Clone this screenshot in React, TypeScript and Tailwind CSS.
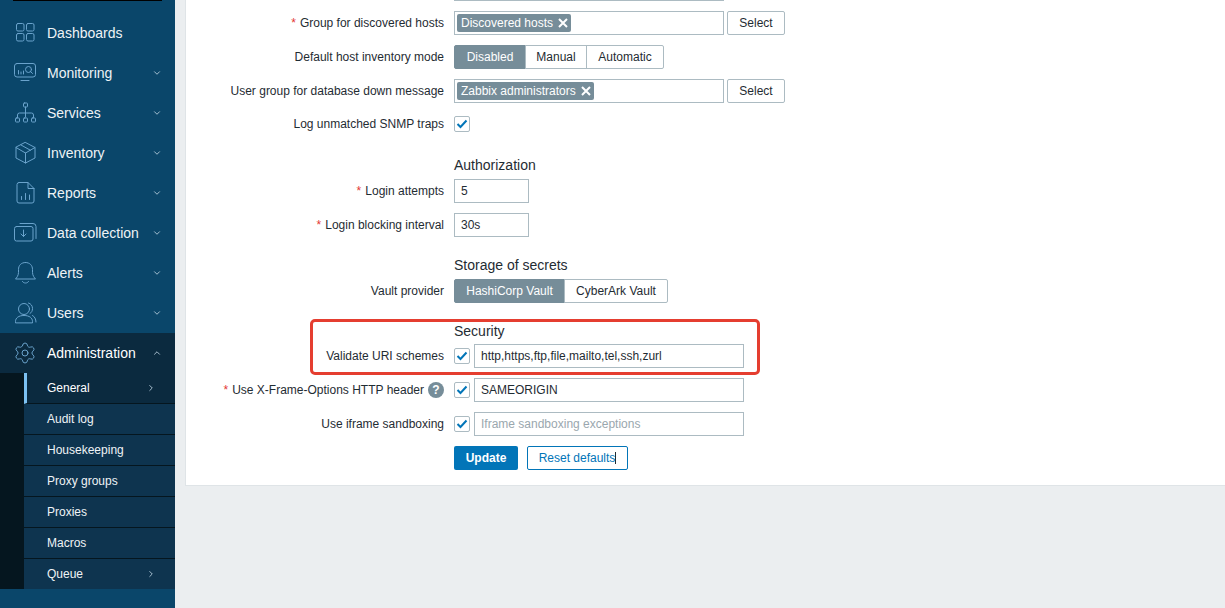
import type { ReactNode } from "react";
import { ChevronDown, ChevronRight, ChevronUp, Settings } from "lucide-react";

const iconProps = {
  width: 24,
  height: 24,
  viewBox: "0 0 24 24",
  fill: "none",
  stroke: "currentColor",
  strokeWidth: 1,
  strokeLinejoin: "round" as const,
  strokeLinecap: "round" as const,
};

const icons: Record<string, ReactNode> = {
  Dashboards: (
    <svg {...iconProps}>
      <rect x="3.5" y="2.5" width="7.5" height="7.5" rx="1.5" />
      <rect x="13.5" y="2.5" width="7.5" height="7.5" rx="1.5" />
      <rect x="3.5" y="12.5" width="7.5" height="7.5" rx="1.5" />
      <rect x="13.5" y="12.5" width="7.5" height="7.5" rx="1.5" />
    </svg>
  ),
  Monitoring: (
    <svg {...iconProps}>
      <rect x="1.5" y="2.5" width="21" height="13.5" rx="2.5" />
      <path d="M8 19.5h8M5.500 9.500v3.500M8 11v2M10.500 10v3M17.500 10.500l2 2" />
      <circle cx="15.500" cy="8.500" r="3" />
    </svg>
  ),
  Services: (
    <svg {...iconProps}>
      <rect x="10.500" y="2" width="4" height="4" rx="0.8" />
      <path d="M12.500 6v10M4.500 16.500v-2.500a2 2 0 0 1 2-2h12a2 2 0 0 1 2 2v2.500" />
      <rect x="2.500" y="17" width="4" height="4" rx="0.8" />
      <rect x="10.500" y="17" width="4" height="4" rx="0.8" />
      <rect x="18.500" y="17" width="4" height="4" rx="0.8" />
    </svg>
  ),
  Inventory: (
    <svg {...iconProps}>
      <path d="M12.500 1.500l9.500 5v10.500l-9.500 5-9.500-5V6.500z" />
      <path d="M3 6.500l9.500 5.500 9.500-5.500M12.500 12v10M8 4l9.500 5.300" />
    </svg>
  ),
  Reports: (
    <svg {...iconProps}>
      <path d="M6 1.500h9l6 6v12.500a2 2 0 0 1-2 2H6a2 2 0 0 1-2-2V3.500a2 2 0 0 1 2-2z" />
      <path d="M15 1.500v6h6M8.500 15.500v3M12.500 12.500v6M16.500 14v4.500" />
    </svg>
  ),
  "Data collection": (
    <svg {...iconProps}>
      <rect x="1.500" y="5.500" width="18.500" height="14.500" rx="2" />
      <path d="M7 2.500h13a3 3 0 0 1 3 3v12M10.500 9v6.500M8 13l2.500 2.500L13 13" />
    </svg>
  ),
  Alerts: (
    <svg {...iconProps}>
      <path d="M12.500 1.500c-4.500 0-7 3-7 7v3c0 3-2 5.500-3 6.500h20c-1-1-3-3.500-3-6.500v-3c0-4-2.500-7-7-7z" />
      <path d="M9.500 20.500c.5 1 1.700 1.500 3 1.500s2.500-.5 3-1.500" />
    </svg>
  ),
  Users: (
    <svg {...iconProps}>
      <circle cx="11" cy="8" r="5.500" />
      <path d="M2.500 21.500v-1c0-3.500 3-6 8.500-6s8.500 2.500 8.500 6v1zM15.500 2c2.500.5 4 3 4 5.500s-1 4-2.500 5M19.500 14.500c2 1 3.500 3.500 3.500 6.500" />
    </svg>
  ),
  Administration: <Settings size={24} strokeWidth={1} />,
};

const menu = [
  "Dashboards",
  "Monitoring",
  "Services",
  "Inventory",
  "Reports",
  "Data collection",
  "Alerts",
  "Users",
];

const subMenu = ["Audit log", "Housekeeping", "Proxy groups", "Proxies", "Macros"];

const MenuItem = ({ name, open }: { name: string; open?: boolean }) => (
  <div className={`h-10 flex items-center pl-[13px] pr-[13px] text-[14px] ${open ? "bg-[#0b2a3f] text-white" : "text-[#eef3f6]"}`}>
    <span className="text-[#6aa3cc] w-6 h-6 shrink-0">{icons[name]}</span>
    <span className="ml-[10px]">{name}</span>
    {name !== "Dashboards" && (
      <span className="ml-auto text-[#c0d6e4]">
        {open ? <ChevronUp size={10} strokeWidth={2} /> : <ChevronDown size={10} strokeWidth={2} />}
      </span>
    )}
  </div>
);

const Sidebar = () => (
  <aside className="w-[175px] shrink-0 bg-[#0a466a] flex flex-col">
    <div className="h-px mx-[13px] bg-black mb-3" />
    {menu.map((m) => (
      <MenuItem key={m} name={m} />
    ))}
    <MenuItem name="Administration" open />
    <div className="bg-[#05161f] pl-6">
      <div className="h-[31px] flex items-center bg-[#0b2a3f] border-b border-[#05161f] border-l-[3px] border-l-[#7cc1f2] pl-5 pr-[19px] text-[12px] text-white">
        General
        <ChevronRight size={10} strokeWidth={2} className="ml-auto text-[#c0d6e4]" />
      </div>
      {subMenu.map((s) => (
        <div key={s} className="h-[31px] flex items-center bg-[#0e344f] border-b border-[#05161f] pl-[23px] text-[12px] text-[#eef3f6]">
          {s}
        </div>
      ))}
      <div className="h-[30px] flex items-center bg-[#0e344f] pl-[23px] pr-[19px] text-[12px] text-[#eef3f6]">
        Queue
        <ChevronRight size={10} strokeWidth={2} className="ml-auto text-[#c0d6e4]" />
      </div>
    </div>
  </aside>
);

const Row = ({ label, required, help, className, children }: { label?: string; required?: boolean; help?: boolean; className?: string; children: ReactNode }) => (
  <div className={`flex items-center h-6 ${className ?? "mb-[10px]"}`}>
    <div className="w-[258px] shrink-0 flex items-center justify-end text-right">
      {required && <span className="text-[#e33734] mr-1">*</span>}
      {label}
      {help && (
        <span className="ml-1 w-4 h-4 rounded-full bg-[#768d99] text-white text-[12px] font-bold flex items-center justify-center">?</span>
      )}
    </div>
    <div className="ml-[10px] flex items-center">{children}</div>
  </div>
);

const Heading = ({ children, className }: { children: ReactNode; className?: string }) => (
  <div className={`pl-[268px] text-[14px] h-5 leading-5 ${className ?? ""}`}>{children}</div>
);

const Tag = ({ children }: { children: ReactNode }) => (
  <span className="h-[18px] ml-[2px] pl-1 pr-[3px] flex items-center gap-[5px] rounded-[2px] bg-[#768d99] text-white">
    {children}
    <svg width="10" height="10" viewBox="0 0 10 10" stroke="currentColor" strokeWidth="2">
      <path d="M1 1l8 8M9 1l-8 8" />
    </svg>
  </span>
);

const MultiSelect = ({ children }: { children: ReactNode }) => (
  <>
    <div className="w-[270px] h-6 border border-[#acbbc2] bg-white flex items-center">{children}</div>
    <button className="ml-[3px] w-[58px] h-6 border border-[#acbbc2] rounded-[2px] bg-white">Select</button>
  </>
);

const Segments = ({ items }: { items: { label: string; w: string }[] }) => (
  <div className="flex h-6">
    {items.map((it, i) => (
      <div
        key={it.label}
        className={`${it.w} flex items-center justify-center border ${
          i === 0
            ? "bg-[#768d99] border-[#768d99] text-white rounded-l-[2px]"
            : `border-[#acbbc2] -ml-px ${i === items.length - 1 ? "rounded-r-[2px]" : ""}`
        }`}
      >
        {it.label}
      </div>
    ))}
  </div>
);

const Check = () => (
  <span className="w-4 h-4 border border-[#acbbc2] rounded-[2px] bg-white flex items-center justify-center text-[#0275b8]">
    <svg width="12" height="10" viewBox="0 0 12 10" fill="none" stroke="currentColor" strokeWidth="2">
      <path d="M1.500 5l3 3 6-6.500" />
    </svg>
  </span>
);

const TextBox = ({ w, children, muted }: { w: string; children?: ReactNode; muted?: boolean }) => (
  <div className={`${w} h-6 border border-[#acbbc2] bg-white flex items-center px-[6px] ${muted ? "text-[#9aa7ae]" : ""}`}>{children}</div>
);

export default function App() {
  return (
    <div className="relative h-[608px] overflow-hidden flex bg-[#ebeef0] text-[12px] text-[#1f2c33] font-['Liberation_Sans',Arial,sans-serif]">
      <Sidebar />
      <main className="ml-[10px] flex-1 self-start bg-white border-l border-b border-[#dfe4e7] pb-[15px]">
        <Row className="-mt-[23px] mb-[10px]">
          <TextBox w="w-[270px]" />
        </Row>
        <Row label="Group for discovered hosts" required>
          <MultiSelect>
            <Tag>Discovered hosts</Tag>
          </MultiSelect>
        </Row>
        <Row label="Default host inventory mode">
          <Segments
            items={[
              { label: "Disabled", w: "w-[72px]" },
              { label: "Manual", w: "w-[62px]" },
              { label: "Automatic", w: "w-[78px]" },
            ]}
          />
        </Row>
        <Row label="User group for database down message" className="mb-[9px]">
          <MultiSelect>
            <Tag>Zabbix administrators</Tag>
          </MultiSelect>
        </Row>
        <Row label="Log unmatched SNMP traps" className="mb-0">
          <Check />
        </Row>

        <Heading className="mt-[19px] mb-1">Authorization</Heading>
        <Row label="Login attempts" required>
          <TextBox w="w-[75px]">5</TextBox>
        </Row>
        <Row label="Login blocking interval" required className="mb-0">
          <TextBox w="w-[75px]">30s</TextBox>
        </Row>

        <Heading className="mt-[18px] mb-1">Storage of secrets</Heading>
        <Row label="Vault provider" className="mb-0">
          <Segments
            items={[
              { label: "HashiCorp Vault", w: "w-[111px]" },
              { label: "CyberArk Vault", w: "w-[104px]" },
            ]}
          />
        </Row>

        <Heading className="mt-[18px] mb-[3px]">Security</Heading>
        <Row label="Validate URI schemes">
          <Check />
          <div className="ml-1">
            <TextBox w="w-[270px]">http,https,ftp,file,mailto,tel,ssh,zurl</TextBox>
          </div>
        </Row>
        <Row label="Use X-Frame-Options HTTP header" required help>
          <Check />
          <div className="ml-1">
            <TextBox w="w-[270px]">SAMEORIGIN</TextBox>
          </div>
        </Row>
        <Row label="Use iframe sandboxing">
          <Check />
          <div className="ml-1">
            <TextBox w="w-[270px]" muted>
              Iframe sandboxing exceptions
            </TextBox>
          </div>
        </Row>
        <Row className="mb-0">
          <button className="w-16 h-6 rounded-[2px] bg-[#0275b8] text-white font-bold">Update</button>
          <button className="ml-[9px] w-[101px] h-6 rounded-[2px] border border-[#0275b8] text-[#0275b8] bg-white flex items-center justify-center">
            Reset defaults
            <span className="w-px h-3 bg-[#1f2c33]" />
          </button>
        </Row>
      </main>

      {/* annotation box */}
      <div className="absolute left-[310px] top-[319px] w-[450px] h-[56px] border-[3px] border-[#e53e30] rounded-[5px]" />
    </div>
  );
}
